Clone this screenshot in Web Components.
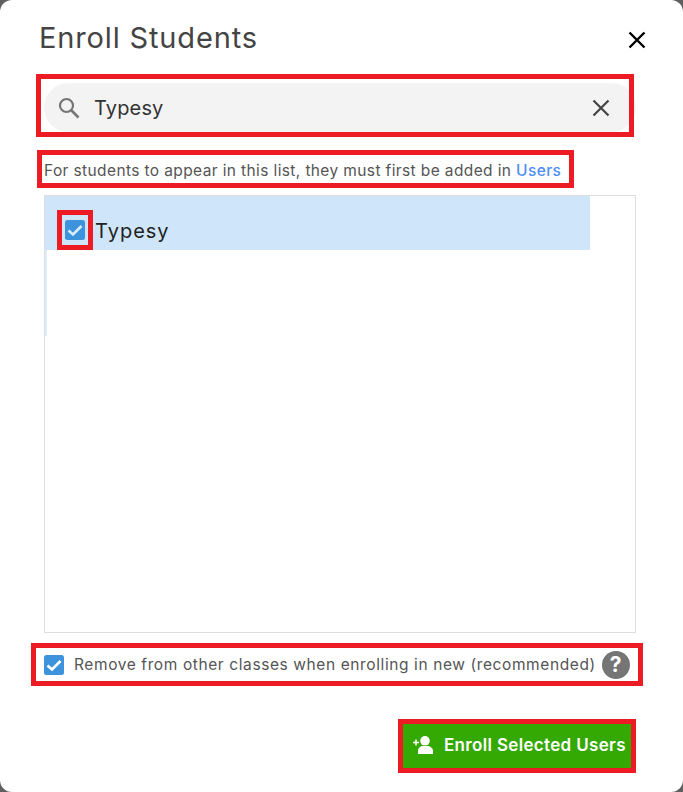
<!DOCTYPE html>
<html>
<head>
<meta charset="utf-8">
<style>
  html, body { margin: 0; height: 100%; background: #5f5f5f; }
  body { font-family: Inter, "Open Sans", sans-serif; overflow: hidden; }
</style>
</head>
<body>
<enroll-dialog>
  <span slot="title">Enroll Students</span>
  <search-field value="Typesy"></search-field>
  <red-mark style="--t:-10px;--r:-13px;--b:-8px;--l:-7px;margin-top:28px;align-self:flex-start">
    <hint-line>For students to appear in this list, they must first be added in <a>Users</a></hint-line>
  </red-mark>
  <student-list>
    <student-row>Typesy</student-row>
  </student-list>
  <remove-option>Remove from other classes when enrolling in new (recommended)</remove-option>
  <enroll-button>Enroll Selected Users</enroll-button>
</enroll-dialog>

<script>
const FONT = `Inter, "Open Sans", sans-serif`;
const CHECK = (color) => `<svg width="20" height="20" viewBox="0 0 20 20" style="display:block">
  <rect width="20" height="20" rx="2.5" fill="#3d94dc"/>
  <path d="M3.500 10.500l4.500 4 8.500-8.500" fill="none" stroke="${color}" stroke-width="2.600"/></svg>`;

class RedMark extends HTMLElement {
  constructor() {
    super();
    this.attachShadow({ mode: 'open' });
    this.shadowRoot.innerHTML = `
      <style>
        :host { display: block; position: relative; }
        .mark {
          position: absolute;
          top: var(--t, 0); right: var(--r, 0); bottom: var(--b, 0); left: var(--l, 0);
          border: 5px solid #ed1c24;
          pointer-events: none;
        }
      </style>
      <slot></slot>
      <div class="mark"></div>
    `;
  }
}
customElements.define('red-mark', RedMark);

class SearchField extends HTMLElement {
  constructor() {
    super();
    this.attachShadow({ mode: 'open' });
    this.shadowRoot.innerHTML = `
      <style>
        :host { display: block; }
        .pill {
          display: flex; align-items: center; height: 49px;
          background: #f3f3f3; border-radius: 25px;
          padding: 0 26px 0 13px;
          font: 20px ${FONT}; letter-spacing: .15px; color: #333;
        }
        svg { display: block; flex: none; }
        span { flex: 1; margin-left: 13px; }
      </style>
      <red-mark style="--t:-9px;--r:2px;--b:-5px;--l:-8px">
        <div class="pill">
          <svg width="24" height="24" viewBox="0 0 24 24"><circle cx="9.500" cy="9.500" r="6.500" fill="none" stroke="#757575" stroke-width="2.200"/><path d="M14.500 14.500l7 7" stroke="#757575" stroke-width="2.600"/></svg>
          <span></span>
          <svg width="18" height="18" viewBox="0 0 18 18"><path d="M1.500 1.500l15 15M16.500 1.500l-15 15" stroke="#444" stroke-width="2.200"/></svg>
        </div>
      </red-mark>
    `;
    this.shadowRoot.querySelector('span').textContent = this.getAttribute('value') || '';
  }
}
customElements.define('search-field', SearchField);

class HintLine extends HTMLElement {
  constructor() {
    super();
    this.attachShadow({ mode: 'open' });
    this.shadowRoot.innerHTML = `
      <style>
        :host { display: block; font: 15.500px/20px ${FONT}; letter-spacing: .38px; color: #555; white-space: nowrap; padding-top: 1px; margin-bottom: -1px; }
        ::slotted(a) { color: #4d8ff5; font-weight: 500; }
      </style>
      <slot></slot>
    `;
  }
}
customElements.define('hint-line', HintLine);

class StudentList extends HTMLElement {
  constructor() {
    super();
    this.attachShadow({ mode: 'open' });
    this.shadowRoot.innerHTML = `
      <style>
        :host { display: block; height: 436px; border: 1px solid #dedede; margin-top: 15px; }
        .strip { width: 2px; height: 86px; background: #dcecf9; }
      </style>
      <slot></slot>
      <div class="strip"></div>
    `;
  }
}
customElements.define('student-list', StudentList);

class StudentRow extends HTMLElement {
  constructor() {
    super();
    this.attachShadow({ mode: 'open' });
    this.shadowRoot.innerHTML = `
      <style>
        :host {
          display: flex; align-items: center; width: 545px; height: 54px;
          background: #cfe6fa; box-sizing: border-box; padding: 14px 0 0 20px;
          font: 20px ${FONT}; letter-spacing: 1px; color: #222;
        }
        .box { margin-right: 10px; }
      </style>
      <red-mark class="box" style="--t:-10px;--r:-8px;--b:-10px;--l:-8px">${CHECK('#d8ecfb')}</red-mark>
      <span style="margin-top:2px"><slot></slot></span>
    `;
  }
}
customElements.define('student-row', StudentRow);

class RemoveOption extends HTMLElement {
  constructor() {
    super();
    this.attachShadow({ mode: 'open' });
    this.shadowRoot.innerHTML = `
      <style>
        :host { display: block; margin-top: 10px; }
        .row {
          display: flex; align-items: center; height: 43px; gap: 10px;
          font: 15.500px ${FONT}; letter-spacing: .6px; color: #555; white-space: nowrap;
        }
        .help {
          width: 28px; height: 28px; border-radius: 50%; background: #757575; color: #fff;
          font: 700 21px/28px ${FONT}; letter-spacing: 0; text-align: center; margin-left: -4px;
        }
      </style>
      <red-mark style="--t:0;--r:-7px;--b:0;--l:-13px">
        <div class="row">
          ${CHECK('#fff')}
          <span><slot></slot></span>
          <div class="help">?</div>
        </div>
      </red-mark>
    `;
  }
}
customElements.define('remove-option', RemoveOption);

class EnrollButton extends HTMLElement {
  constructor() {
    super();
    this.attachShadow({ mode: 'open' });
    this.shadowRoot.innerHTML = `
      <style>
        :host { display: block; align-self: flex-end; margin: 38px 5px 0 0; }
        .btn {
          display: flex; align-items: center; gap: 11px; box-sizing: border-box; width: 228px;
          height: 44px; padding: 0 0 0 10px; background: #34a803; color: #fff;
          font: 600 17px ${FONT}; letter-spacing: .33px; white-space: nowrap;
        }
        svg { display: block; margin-top: -3px; }
        span { margin-top: -3px; }
      </style>
      <red-mark style="--t:-5px;--r:-5px;--b:-5px;--l:-5px">
        <div class="btn">
          <svg width="20" height="18" viewBox="0 0 20 18" fill="#fff"><circle cx="12" cy="4.800" r="4.800"/><path d="M5 18v-3c0-3 2.500-5 5-5h4c3 0 6 2 6 5v3z"/><path d="M0 6.500h6M3 3.500v6" stroke="#fff" stroke-width="1.500"/></svg>
          <span><slot></slot></span>
        </div>
      </red-mark>
    `;
  }
}
customElements.define('enroll-button', EnrollButton);

class EnrollDialog extends HTMLElement {
  constructor() {
    super();
    this.attachShadow({ mode: 'open' });
    this.shadowRoot.innerHTML = `
      <style>
        :host {
          display: block; box-sizing: border-box; width: 683px; height: 792px;
          background: #fff; border-radius: 12px; padding: 0 47px 0 44px;
          font-family: ${FONT}; position: relative;
        }
        .content { display: flex; flex-direction: column; }
        header { display: flex; align-items: center; justify-content: space-between; height: 83px; }
        .title { font: 29px ${FONT}; letter-spacing: .85px; color: #444; margin: -8px 0 0 -5px; }
        svg { display: block; margin: -4px -10px 0 0; }
      </style>
      <div class="content">
        <header>
          <div class="title"><slot name="title"></slot></div>
          <svg width="18" height="18" viewBox="0 0 18 18"><path d="M1.500 1.500l15 15M16.500 1.500l-15 15" stroke="#000" stroke-width="2.400"/></svg>
        </header>
        <slot></slot>
      </div>
    `;
  }
}
customElements.define('enroll-dialog', EnrollDialog);
</script>
</body>
</html>
